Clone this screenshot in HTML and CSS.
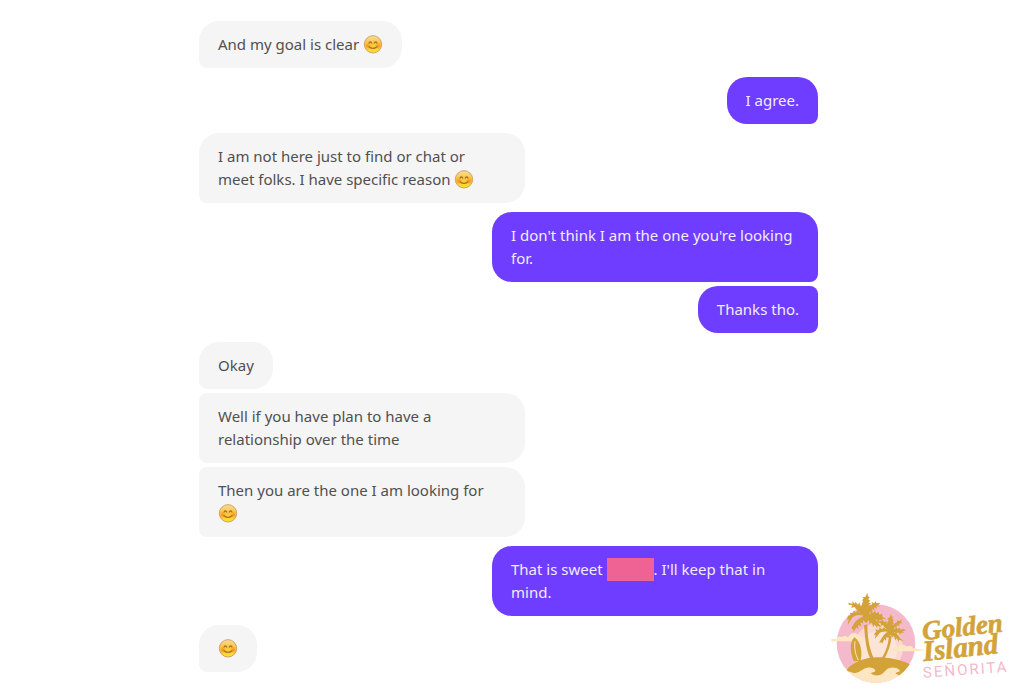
FILE: index.html
```
<!DOCTYPE html>
<html lang="en">

<head>
  <meta charset="UTF-8">
  <meta name="viewport" content="width=device-width, initial-scale=1.0">
  <title>Chat</title>
  <link rel="stylesheet" href="styles.css">
</head>

<body>
  <!-- Shared smiley -->
  <svg class="sprite" aria-hidden="true">
    <defs>
      <linearGradient id="face" x1="0" y1="0" x2="0" y2="1">
        <stop offset="0" stop-color="#f8dc9c" />
        <stop offset="0.45" stop-color="#fbc53c" />
        <stop offset="1" stop-color="#fde02a" />
      </linearGradient>
      <radialGradient id="cheek">
        <stop offset="0" stop-color="#fb8a2c" />
        <stop offset="1" stop-color="#fb9a2c" stop-opacity="0" />
      </radialGradient>
    </defs>
    <symbol id="smile" viewBox="0 0 60 60">
      <circle cx="30" cy="31" r="26" fill="url(#face)" stroke="#d0a468" stroke-width="3" />
      <circle cx="14" cy="36" r="11" fill="url(#cheek)" />
      <circle cx="46" cy="36" r="11" fill="url(#cheek)" />
      <path d="M18 27q4-6 8 0M34 27q4-6 8 0M18 38q12 10 24 0" fill="none" stroke="#a8742a" stroke-width="4" stroke-linecap="round" />
    </symbol>
  </svg>

  <main class="chat">
    <div class="group">
      <p class="bubble">And my goal is clear <svg class="emoji" role="img" aria-label="smile"><use href="#smile" /></svg></p>
    </div>
    <div class="group sent">
      <p class="bubble">I agree.</p>
    </div>
    <div class="group">
      <p class="bubble wide">I am not here just to find or chat or<br>meet folks. I have specific reason <svg class="emoji" role="img" aria-label="smile"><use href="#smile" /></svg></p>
    </div>
    <div class="group sent">
      <p class="bubble">I don't think I am the one you're looking for.</p>
      <p class="bubble">Thanks tho.</p>
    </div>
    <div class="group">
      <p class="bubble">Okay</p>
      <p class="bubble">Well if you have plan to have a relationship over the time</p>
      <p class="bubble">Then you are the one I am looking for <svg class="emoji" role="img" aria-label="smile"><use href="#smile" /></svg></p>
    </div>
    <div class="group sent">
      <p class="bubble">That is sweet <span class="redacted"></span>. I'll keep that in mind.</p>
    </div>
    <div class="group">
      <p class="bubble"><svg class="emoji" role="img" aria-label="smile"><use href="#smile" /></svg></p>
    </div>
  </main>

  <!-- Watermark -->
  <svg class="logo" viewBox="0 0 594 309" role="img" aria-label="Golden Island Señorita">
    <defs>
      <clipPath id="disc">
        <circle cx="150" cy="167" r="118" />
      </clipPath>
    </defs>
    <circle cx="150" cy="167" r="118" fill="#f4b9ca" />
    <g clip-path="url(#disc)">
      <circle cx="157" cy="180" r="74" fill="#fbd9d0" />
      <circle cx="157" cy="186" r="56" fill="#fde4d8" />
      <path d="M30 300V240H60C90 236 130 230 150 226H290V300Z" fill="#fde7c3" />
      <path d="M56 249C90 214 130 205 165 208C205 210 240 221 262 234L240 258C228 267 214 262 208 255C212 252 221 252 222 248C216 239 199 236 188 241C176 247 171 261 157 262C147 263 139 261 134 255C141 254 149 252 148 247C142 236 123 237 112 244C98 253 88 258 76 253C69 250 62 248 56 249Z" fill="#d3a339" />
    </g>
    <path d="M16 161V153H32C33 146 42 143 48 148C52 142 64 143 66 149C72 132 95 131 98 145C106 144 112 151 117 151L123 159C86 163 52 158 16 161Z" fill="#fde7c3" />
    <path d="M190 185C202 184 204 178 212 178C220 166 237 168 240 176C250 170 260 174 261 181C270 179 276 183 280 183L302 187L268 190H190Z" fill="#fde7c3" />

    <g fill="#d3a339">
      <path d="M83 219C71 190 71 158 86 148C104 162 111 194 103 219Z" />
      <path d="M114 112L124 109C124 147 130 185 145 214H134C118 182 117 145 114 112Z" />
      <path d="M189 142L197 144C195 169 186 193 174 214H165C181 190 187 167 189 142Z" />
      <path d="M118 84C104 67 105 48 112 39L107 37L113 32L110 27L118 27L124 14L126 25L131 28L126 34L133 38L127 43L136 47L128 50L135 57L127 58L131 66L125 65Z" />
      <path d="M119 83C105 77 91 66 85 56L76 61L78 51L68 50L67 44L80 47L78 39L87 47L88 41L96 50L100 43L104 54L110 50L111 61L118 65L126 77Z" />
      <path d="M118 83C118 67 128 53 139 49L137 41L144 46L149 40L151 46L164 44L156 51L161 56L151 54L153 62L144 58L146 68L138 62L140 73L132 69L130 80Z" />
      <path d="M121 88C106 77 86 80 78 90L65 111L68 92L63 97L66 84L74 81L71 74L82 76L82 68L91 74L93 66L101 74L107 69L112 77L125 79Z" />
      <path d="M118 84C107 86 94 94 87 102L76 121L81 124L83 132L91 118L97 124L96 111L106 115L103 103L112 107L110 95L119 98L127 85Z" />
      <path d="M117 83L134 77L133 68L141 75L147 68L150 76L158 72L160 80L169 77L169 86L181 94L166 92L172 99L160 96L157 103L151 94L145 99L141 90L132 94Z" />
      <path d="M117 81C137 84 152 96 158 106L167 119L154 113L154 121L146 110L141 117L138 104L130 108L129 96L120 98Z" />
      <path d="M110 85L118 76L129 84L128 97L121 105L112 98Z" />

      <path d="M191 127C181 115 182 101 189 96L184 92L191 88L195 77L197 87L203 85L198 93L204 96L199 101L205 106L199 109L204 115L198 115L200 124Z" />
      <path d="M192 130C181 126 175 117 171 112L163 113L165 107L151 99L168 100L169 94L175 103L181 99L182 108L188 108L196 124Z" />
      <path d="M190 128C194 116 205 106 213 103L213 97L219 100L229 94L224 102L230 105L219 107L221 114L212 112L212 119L205 117L205 126L196 131Z" />
      <path d="M192 134C180 128 164 130 159 137L146 154L149 140L143 141L151 130L148 124L159 126L160 118L168 124L174 117L178 124L186 120L196 128Z" />
      <path d="M192 129C181 132 172 141 167 151L159 164L166 163L168 168L175 153L180 158L181 147L187 150L196 133Z" />
      <path d="M193 128L208 123L209 117L215 123L222 119L223 126L231 122L239 126L228 131L237 133L225 135L222 140L218 133L210 138L206 132L198 137Z" />
      <path d="M191 129C207 131 220 142 222 150L233 160L219 155L219 163L212 151L208 157L204 144L198 148Z" />
      <circle cx="193" cy="133" r="9" />
    </g>
    <!-- Surfboard stripe -->
    <path d="M87 160C84 178 88 200 97 216" fill="none" stroke="#fde7c3" stroke-width="3" />

    <text class="logo-name" font-size="81" transform="translate(291 156) rotate(-6)">Golden</text>
    <text class="logo-name" font-size="87" transform="translate(293 219) rotate(-6)">Island</text>
    <text class="logo-tag" font-size="45" transform="translate(292 269) rotate(-4)">SEÑORITA</text>
  </svg>
</body>

</html>
```
FILE: styles.css
```
body {
  margin: 0;
  background-color: #fff;
  color: #505050;
  font-family: 'Noto Sans', 'Open Sans', sans-serif;
  font-size: 15px;
  line-height: 23px;
}

.sprite {
  position: absolute;
  width: 0;
  height: 0;
}

.chat {
  display: flex;
  flex-direction: column;
  gap: 9px;
  padding: 21px 206px 19px 199px;
}

.group {
  display: flex;
  flex-direction: column;
  align-items: flex-start;
  gap: 4px;
}

.bubble {
  box-sizing: border-box;
  max-width: 326px;
  margin: 0;
  padding: 12px 19px;
  background-color: #f5f5f5;
  border-radius: 8px 20px 20px 8px;
}

.bubble.wide {
  width: 326px;
}

/* First bubble of a group keeps the round outer corner */
.bubble:first-child {
  border-top-left-radius: 20px;
}

.sent {
  align-items: flex-end;
}

.sent .bubble {
  background-color: #6e3dff;
  color: #f1ecff;
  border-radius: 20px 8px 8px 20px;
}

.sent .bubble:first-child {
  border-top-right-radius: 20px;
}

.emoji {
  width: 20px;
  height: 20px;
  vertical-align: -4px;
}

.redacted {
  display: inline-block;
  width: 47px;
  height: 23px;
  background-color: #ef6394;
  vertical-align: top;
}

.logo {
  position: absolute;
  right: 0;
  bottom: 0;
  width: 198px;
  height: 103px;
}

.logo-name {
  font-family: 'Liberation Serif', serif;
  font-weight: bold;
  font-style: italic;
  fill: #d3a339;
  stroke: #d3a339;
  stroke-width: 2px;
}

.logo-tag {
  font-family: Roboto, sans-serif;
  letter-spacing: 6px;
  fill: #f4b9ca;
}
```
